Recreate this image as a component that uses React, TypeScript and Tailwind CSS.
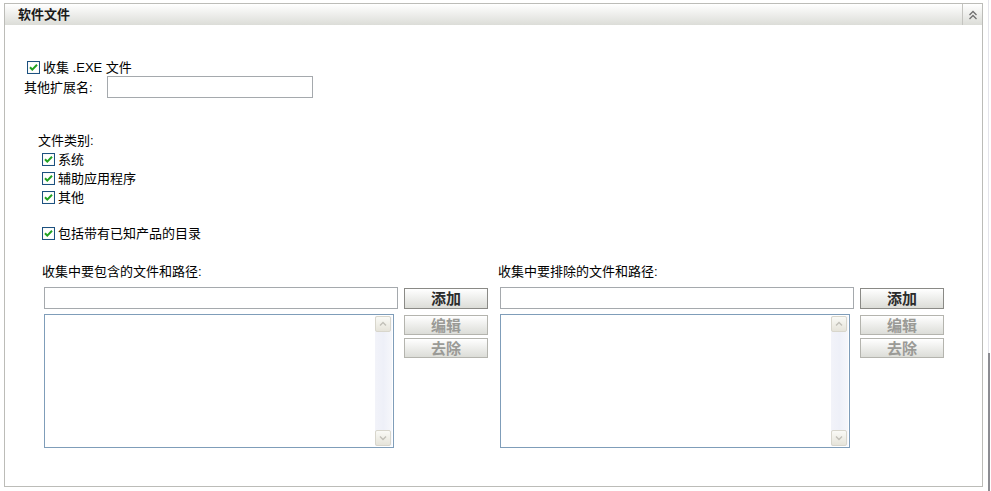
import React from "react";

const FONT = { fontFamily: '"Liberation Sans", "Noto Sans CJK SC", sans-serif' };

function Check() {
  return (
    <svg width="13" height="13" viewBox="0 0 13 13" className="shrink-0">
      <rect x="0.5" y="0.5" width="12" height="12" fill="#f4f4f0" stroke="#1c5180" />
      <rect x="1.5" y="1.5" width="10" height="10" fill="#ffffff" />
      <path d="M3 6.2 L5.3 8.6 L10 3.8" fill="none" stroke="#21a121" strokeWidth="2" />
    </svg>
  );
}

function CheckRow({ label, className }: { label: string; className?: string }) {
  return (
    <div className={"flex items-center gap-[3px] h-[14px] " + (className ?? "")}>
      <Check />
      <span className="text-[13px] leading-none text-black">{label}</span>
    </div>
  );
}

function Btn({ label, disabled }: { label: string; disabled?: boolean }) {
  return (
    <button
      className={
        "w-[84px] flex items-center justify-center bg-gradient-to-b from-white to-[#dcddd8] text-[15px] font-bold leading-none " +
        (disabled
          ? "h-[20px] border border-[#b4b4ae] text-[#9a9a96]"
          : "h-[21px] border border-[#8a8a86] text-[#2c2c2c]")
      }
    >
      {label}
    </button>
  );
}

function ScrollArrow({ down }: { down?: boolean }) {
  return (
    <div className="h-[16px] w-[16px] border border-[#d8d6cc] rounded-[2px] bg-gradient-to-b from-[#fafaf6] to-[#e6e4da] flex items-center justify-center">
      <svg width="8" height="6" viewBox="0 0 8 6">
        <path d={down ? "M1 1.5 L4 4.5 L7 1.5" : "M1 4.5 L4 1.5 L7 4.5"} fill="none" stroke="#c2c0b8" strokeWidth="1.4" />
      </svg>
    </div>
  );
}

function PathColumn({ title }: { title: string }) {
  return (
    <div className="flex flex-col w-[444px]">
      <div className="text-[13px] leading-none h-[13px] ml-[-2px] text-black">{title}</div>
      <div className="flex gap-[6px] mt-[9px]">
        <input className="w-[354px] h-[22px] border border-[#a5a9ad] bg-white outline-none" />
        <div className="mt-[1px]">
          <Btn label="添加" />
        </div>
      </div>
      <div className="flex gap-[10px] mt-[5px]">
        <div className="w-[350px] h-[134px] border border-[#7f9db9] bg-white flex justify-end p-[1px]">
          <div className="w-[17px] h-full bg-gradient-to-r from-[#f2f3f9] via-[#eef0f8] to-[#f6f7fb] flex flex-col justify-between">
            <ScrollArrow />
            <ScrollArrow down />
          </div>
        </div>
        <div className="flex flex-col gap-[3px] mt-[1px]">
          <Btn label="编辑" disabled />
          <Btn label="去除" disabled />
        </div>
      </div>
    </div>
  );
}

export default function App() {
  return (
    <div className="w-[991px] h-[491px] bg-white flex" style={FONT}>
      <div className="ml-[4px] mt-[3px] w-[979px] h-[484px] border border-[#bcbcb8] flex flex-col">
        <div className="h-[21px] flex bg-gradient-to-b from-white to-[#dcddd8]">
          <div className="flex-1 pl-[13px] pt-[4px] text-[13px] font-bold leading-none text-[#1a1a1a]">软件文件</div>
          <div className="w-[20px] border-l border-[#c4c4c0] flex items-center justify-center">
            <svg width="10" height="10" viewBox="0 0 10 10">
              <path d="M1.5 5 L5 1.5 L8.5 5 M1.5 9 L5 5.5 L8.5 9" fill="none" stroke="#707070" strokeWidth="1.3" />
            </svg>
          </div>
        </div>

        <div className="flex flex-col pl-[22px] pt-[35px]">
          <CheckRow label="收集 .EXE 文件" />
          <div className="flex items-center mt-[2px] ml-[-3px]">
            <span className="text-[13px] leading-none w-[83px] text-black">其他扩展名:</span>
            <input className="w-[206px] h-[22px] border border-[#a5a9ad] bg-white outline-none" />
          </div>

          <div className="ml-[11px] mt-[36px] text-[13px] leading-none h-[13px] text-black">文件类别:</div>
          <div className="ml-[15px] mt-[5px] flex flex-col gap-[5px]">
            <CheckRow label="系统" />
            <CheckRow label="辅助应用程序" />
            <CheckRow label="其他" />
          </div>
          <CheckRow label="包括带有已知产品的目录" className="ml-[15px] mt-[22px]" />

          <div className="flex gap-[12px] ml-[17px] mt-[25px]">
            <PathColumn title="收集中要包含的文件和路径:" />
            <PathColumn title="收集中要排除的文件和路径:" />
          </div>
        </div>
      </div>
      <div className="ml-[5px] w-[2px] h-full flex flex-col">
        <div className="h-[353px] w-[1px] bg-[#e4e4ea]" />
        <div className="flex-1 w-[2px] bg-[#8c8c92]" />
      </div>
    </div>
  );
}
